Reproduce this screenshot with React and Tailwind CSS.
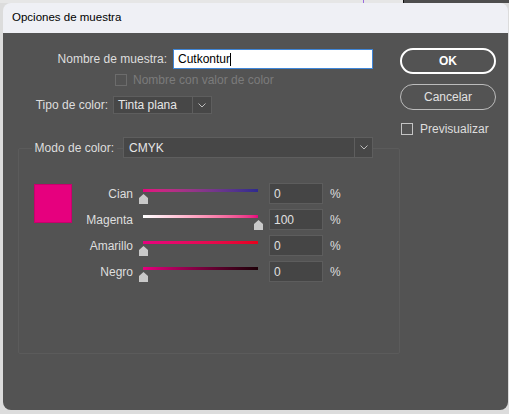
const font = { fontFamily: '"Liberation Sans", Arial, sans-serif' };

const Chevron = () => (
  <svg width="8" height="5" viewBox="0 0 8 5" fill="none">
    <polyline points="0.5,0.5 4,4 7.5,0.5" stroke="#bdbdbd" strokeWidth="1" />
  </svg>
);

const Thumb = ({ left }) => (
  <svg className="absolute top-[11px]" style={{ left }} width="9" height="10" viewBox="0 0 9 10">
    <path d="M4.5 0 L9 4 L9 10 L0 10 L0 4 Z" fill="#c9c9c9" />
  </svg>
);

const channels = [
  { name: 'Cian', value: '0', pct: 0, track: 'bg-gradient-to-r from-[#e6007e] to-[#2e2a8f]' },
  { name: 'Magenta', value: '100', pct: 1, track: 'bg-gradient-to-r from-[#ffffff] to-[#e6007e]' },
  { name: 'Amarillo', value: '0', pct: 0, track: 'bg-gradient-to-r from-[#e6007e] to-[#e6001a]' },
  { name: 'Negro', value: '0', pct: 0, track: 'bg-gradient-to-r from-[#e6007e] to-[#1e0008]' },
];

const App = () => {
  return (
    <div className="w-[509px] h-[414px] bg-[#dcdcdc] overflow-hidden flex flex-col text-[12px]" style={font}>
      <div className="h-[3px] flex shrink-0">
        <div className="w-[403px] bg-[#e6e6e6] flex">
          <div className="w-[363px]" />
          <div className="w-[1px] bg-[#9a6ce0]" />
        </div>
        <div className="w-[1px] bg-[#111]" />
        <div className="flex-1 bg-[#4e4e4e]" />
      </div>
      <div className="ml-[3px] w-[505px] h-[407px] rounded-[8px] overflow-hidden flex flex-col">
        <div className="h-[30px] bg-[#eff0f5] flex items-center pl-[9px] text-[11.5px] text-black shrink-0">
          Opciones de muestra
        </div>
        <div className="flex-1 bg-[#535353] flex text-[#dedede]">
          <div className="w-[397px] flex flex-col">
            <div className="mt-[16px] flex items-center h-[20px]">
              <span className="w-[164px] text-right">Nombre de muestra:</span>
              <div className="ml-[6px] w-[200px] h-[20px] bg-white border border-[#3f86d8] flex items-center pl-[4px] text-black">
                Cutkontur<span className="w-[1px] h-[13px] bg-black" />
              </div>
            </div>
            <div className="mt-[5px] flex items-center h-[12px] ml-[112px]">
              <div className="w-[12px] h-[12px] border border-[#6c6c6c]" />
              <span className="ml-[6px] text-[#7b7b7b]">Nombre con valor de color</span>
            </div>
            <div className="mt-[10px] flex items-center h-[18px]">
              <span className="w-[105px] text-right">Tipo de color:</span>
              <div className="ml-[5px] w-[99px] h-[18px] bg-[#474747] border border-[#5e5e5e] flex items-center">
                <span className="flex-1 pl-[4px] text-[#e6e6e6]">Tinta plana</span>
                <div className="w-[19px] h-full border-l border-[#5e5e5e] flex items-center justify-center">
                  <Chevron />
                </div>
              </div>
            </div>
            <div className="mt-[23px] flex items-center h-[21px] relative z-10">
              <div className="w-[111px] flex justify-end">
                <span className="bg-[#535353] px-[3px] mr-[-3px]">Modo de color:</span>
              </div>
              <div className="ml-[9px] w-[250px] h-[21px] bg-[#474747] border border-[#5e5e5e] flex items-center">
                <span className="flex-1 pl-[5px] text-[#e6e6e6]">CMYK</span>
                <div className="w-[18px] h-full border-l border-[#5e5e5e] flex items-center justify-center">
                  <Chevron />
                </div>
              </div>
            </div>
            <div className="ml-[15px] mt-[-10px] w-[382px] h-[206px] border border-[#5b5b5b] rounded-[2px] pl-[15px] pt-[34px] flex items-start">
              <div className="mt-[1px] w-[38px] h-[39px] bg-[#e6007e] border border-[#c8006c]" />
              <div className="flex flex-col gap-[5px]">
                {channels.map((c) => (
                  <div key={c.name} className="flex items-center h-[21px]">
                    <span className="w-[61px] text-right">{c.name}</span>
                    <div className="relative w-[136px] h-[21px]">
                      <div className={`absolute left-[10px] top-[6px] w-[115px] h-[3px] ${c.track}`} />
                      <Thumb left={6 + c.pct * 115} />
                    </div>
                    <div className="w-[54px] h-[21px] bg-[#454545] border border-[#5d5d5d] flex items-center pl-[4px] text-[#e0e0e0]">
                      {c.value}
                    </div>
                    <span className="ml-[7px]">%</span>
                  </div>
                ))}
              </div>
            </div>
          </div>
          <div className="w-[96px] flex flex-col">
            <button className="mt-[15px] h-[26px] rounded-full border-2 border-white text-white font-bold text-[12px]">OK</button>
            <button className="mt-[10px] h-[26px] rounded-full border border-[#bcbcbc] text-[#e2e2e2] text-[12px]">Cancelar</button>
            <div className="mt-[13px] ml-[1px] flex items-center h-[12px]">
              <div className="w-[12px] h-[12px] border border-[#c4c4c4]" />
              <span className="ml-[7px]">Previsualizar</span>
            </div>
          </div>
        </div>
      </div>
    </div>
  );
};

export default App;
